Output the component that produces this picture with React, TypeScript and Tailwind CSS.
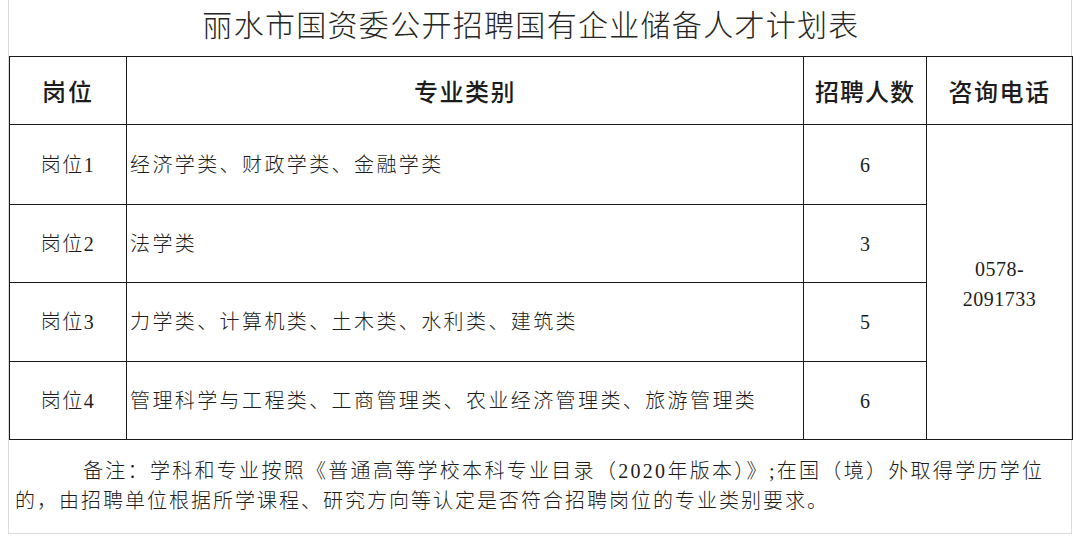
const rows = [
  { post: '岗位1', major: '经济学类、财政学类、金融学类', count: '6', h: 'h-[80px]' },
  { post: '岗位2', major: '法学类', count: '3', h: 'h-[78px]' },
  { post: '岗位3', major: '力学类、计算机类、土木类、水利类、建筑类', count: '5', h: 'h-[79px]' },
  { post: '岗位4', major: '管理科学与工程类、工商管理类、农业经济管理类、旅游管理类', count: '6', h: 'h-[78px]' },
];

const serif = "font-['Liberation_Serif','Noto_Sans_CJK_SC',serif]";
const sans = "font-['Noto_Sans_CJK_SC',sans-serif]";

export default function App() {
  return (
    <div className="w-[1080px] h-[541px] bg-white overflow-hidden text-[#1c1c1c]">
      <div className="ml-[8px] w-[1064px] border-x border-b border-[#dcdcdc]">
        <div className={`h-[56px] flex items-center justify-center pb-[10px] pr-[18px] text-[30px] tracking-[1.3px] font-light text-[#262626] ${sans}`}>
          丽水市国资委公开招聘国有企业储备人才计划表
        </div>

        <table className={`w-[1063px] border-collapse table-fixed text-[20px] ${serif}`}>
          <colgroup>
            <col className="w-[117px]" />
            <col className="w-[677px]" />
            <col className="w-[123px]" />
            <col className="w-[146px]" />
          </colgroup>
          <thead>
            <tr className={`h-[68px] text-[24px] ${sans}`}>
              <th className="border-[1.5px] border-[#1a1a1a] font-medium tracking-[2px]">岗位</th>
              <th className="border-[1.5px] border-[#1a1a1a] font-medium tracking-[1.5px]">专业类别</th>
              <th className="border-[1.5px] border-[#1a1a1a] font-medium tracking-[1px]">招聘人数</th>
              <th className="border-[1.5px] border-[#1a1a1a] font-medium tracking-[1.5px]">咨询电话</th>
            </tr>
          </thead>
          <tbody>
            {rows.map((r, i) => (
              <tr key={r.post} className={r.h}>
                <td className="border-[1.5px] border-[#1a1a1a] text-center font-light tracking-[1.5px]">{r.post}</td>
                <td className="border-[1.5px] border-[#1a1a1a] pl-[3px] font-light tracking-[2.4px] whitespace-nowrap">{r.major}</td>
                <td className="border-[1.5px] border-[#1a1a1a] text-center">{r.count}</td>
                {i === 0 && (
                  <td rowSpan={4} className="border-[1.5px] border-[#1a1a1a] text-center align-middle leading-[30px] pt-[4px] tracking-[0.5px]">
                    0578-
                    <br />
                    2091733
                  </td>
                )}
              </tr>
            ))}
          </tbody>
        </table>

        <div className={`pt-[16px] pb-[17px] pl-[6px] text-[20px] leading-[30px] font-light whitespace-nowrap ${serif}`}>
          <p className="pl-[68px] tracking-[2.3px]">备注：学科和专业按照《普通高等学校本科专业目录（2020年版本）》;在国（境）外取得学历学位</p>
          <p className="tracking-[2px]">的，由招聘单位根据所学课程、研究方向等认定是否符合招聘岗位的专业类别要求。</p>
        </div>
      </div>
    </div>
  );
}
